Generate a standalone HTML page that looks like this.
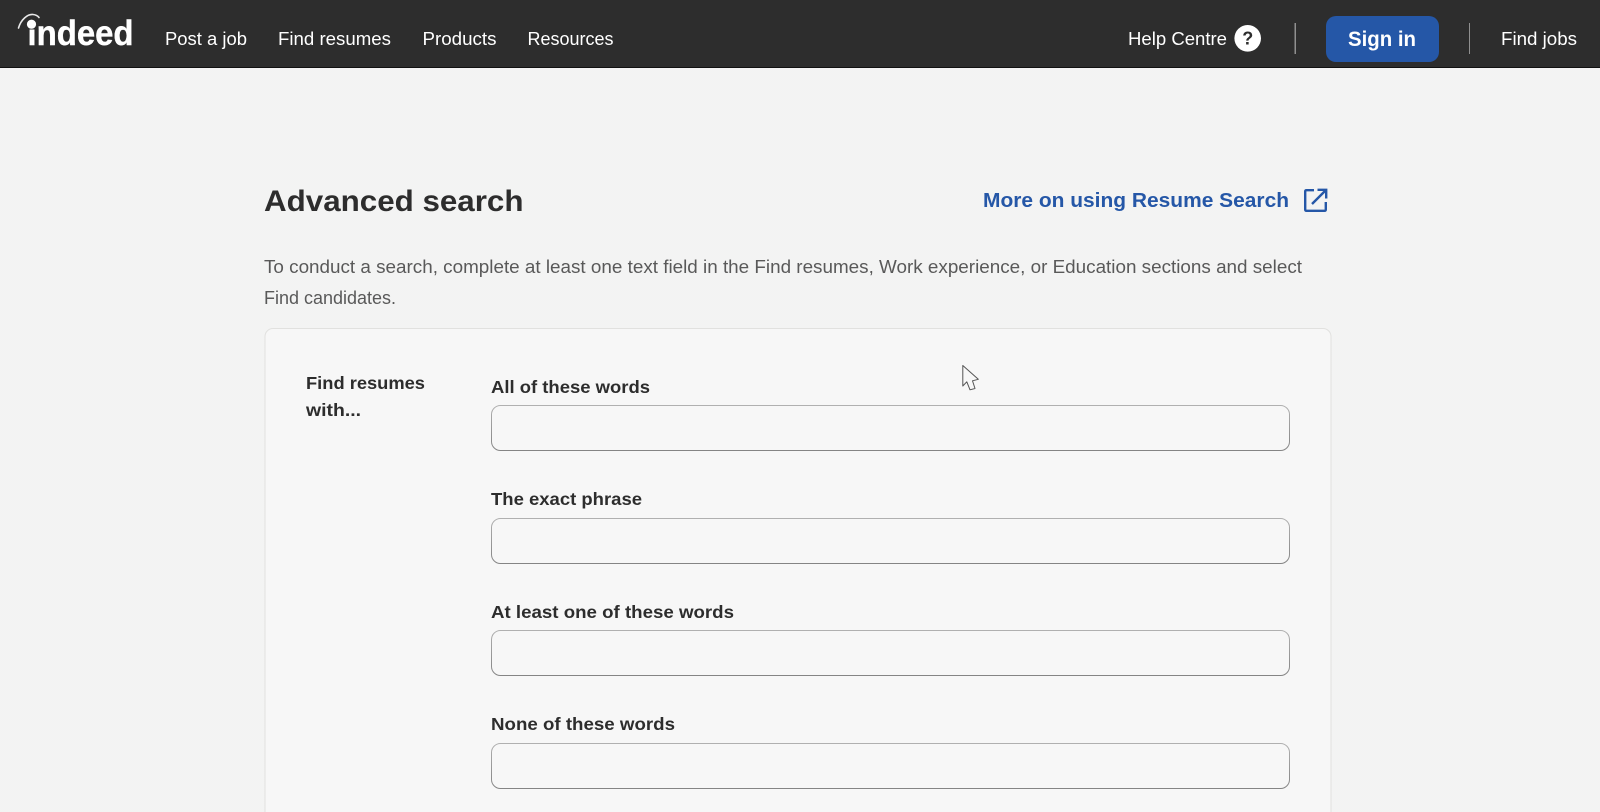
<!DOCTYPE html>
<html lang="en">
<head>
<meta charset="utf-8">
<title>Advanced search</title>
<style>
html,body{margin:0;padding:0;width:1600px;height:812px;overflow:hidden;background:#f3f3f2}
svg{display:block;position:absolute;left:0;top:0}
text{font-family:"Liberation Sans",Arial,sans-serif}
.n{font-size:18px;fill:#fff}
.l{font-size:17.5px;font-weight:700;fill:#2d2d2d}
.p{font-size:18px;fill:#595959}
</style>
</head>
<body>
<svg width="1600" height="812" viewBox="0 0 1600 812" xmlns="http://www.w3.org/2000/svg">
<defs>
<pattern id="d" width="2" height="2" patternUnits="userSpaceOnUse">
<rect width="2" height="2" fill="#f4f4f2"/>
<rect width="1" height="1" fill="#f2f3f4"/>
<rect x="1" y="1" width="1" height="1" fill="#f2f3f4"/>
</pattern>
<linearGradient id="b" x1="0" y1="0" x2="0" y2="1">
<stop offset="0" stop-color="#b0b0b0"/>
<stop offset="1" stop-color="#858585"/>
</linearGradient>
</defs>
<rect width="1600" height="812" fill="url(#d)"/>

<!-- header -->
<rect width="1600" height="68" fill="#2d2d2d"/>
<rect y="67" width="1600" height="1" fill="#111"/>

<!-- logo -->
<text x="27.500" y="45" font-size="35" font-weight="700" fill="#fff" stroke="#fff" stroke-width="0.400" textLength="106" lengthAdjust="spacingAndGlyphs">indeed</text>
<rect x="26" y="17" width="9.800" height="12.500" fill="#2d2d2d"/>
<circle cx="31.500" cy="24.200" r="4.600" fill="#fff"/>
<path d="M18.500 28C21 19.500 27.500 14 33 14.500C35.500 14.700 37.500 15.500 39 17.500" fill="none" stroke="#e8e8e8" stroke-width="1.600" stroke-linecap="round"/>

<!-- nav -->
<text class="n" x="165" y="45" textLength="82" lengthAdjust="spacingAndGlyphs">Post a job</text>
<text class="n" x="278" y="45" textLength="113" lengthAdjust="spacingAndGlyphs">Find resumes</text>
<text class="n" x="422.500" y="45" textLength="74" lengthAdjust="spacingAndGlyphs">Products</text>
<text class="n" x="527.500" y="45" textLength="86" lengthAdjust="spacingAndGlyphs">Resources</text>

<text class="n" x="1128" y="45" textLength="99" lengthAdjust="spacingAndGlyphs">Help Centre</text>
<circle cx="1247.700" cy="38.300" r="13.300" fill="#fff"/>
<text x="1247.700" y="44.500" font-size="18" font-weight="700" fill="#2d2d2d" text-anchor="middle">?</text>
<rect x="1294.500" y="23" width="1.500" height="31" fill="#8f8f8f"/>
<rect x="1326" y="16" width="113" height="46" rx="10" fill="#2557a7"/>
<text x="1348" y="46" font-size="21" font-weight="700" fill="#fff" textLength="68" lengthAdjust="spacingAndGlyphs">Sign in</text>
<rect x="1469" y="23" width="1" height="31" fill="#8f8f8f"/>
<text class="n" x="1501" y="45" textLength="76" lengthAdjust="spacingAndGlyphs">Find jobs</text>

<!-- title row -->
<text x="264" y="211" font-size="30" font-weight="700" fill="#2d2d2d" textLength="259.500" lengthAdjust="spacingAndGlyphs">Advanced search</text>
<text x="983" y="207" font-size="20" font-weight="700" fill="#2557a7" textLength="306" lengthAdjust="spacingAndGlyphs">More on using Resume Search</text>
<path d="M1314 190.200H1306.500C1305.700 190.200 1305.200 190.700 1305.200 191.500V209.500C1305.200 210.300 1305.700 210.800 1306.500 210.800H1324.500C1325.300 210.800 1325.800 210.300 1325.800 209.500V202" fill="none" stroke="#2557a7" stroke-width="2.400"/>
<path d="M1312 204L1325 191M1317.500 189.800H1326.200V198.500" fill="none" stroke="#2557a7" stroke-width="2.400"/>

<!-- paragraph -->
<text class="p" x="264" y="273" textLength="1038" lengthAdjust="spacingAndGlyphs">To conduct a search, complete at least one text field in the Find resumes, Work experience, or Education sections and select</text>
<text class="p" x="264" y="304" textLength="132" lengthAdjust="spacingAndGlyphs">Find candidates.</text>

<!-- card -->
<path d="M265 830V336.500A8 8 0 0 1 273 328.500H1323A8 8 0 0 1 1331 336.500V830Z" fill="#f7f7f7" stroke="#e1e1df" stroke-width="1"/>

<text class="l" x="306" y="389" textLength="119" lengthAdjust="spacingAndGlyphs">Find resumes</text>
<text class="l" x="306" y="416" textLength="55" lengthAdjust="spacingAndGlyphs">with...</text>

<text class="l" x="491" y="393" textLength="159" lengthAdjust="spacingAndGlyphs">All of these words</text>
<rect x="491.500" y="405.500" width="798" height="45" rx="9" fill="#f7f7f7" stroke="url(#b)"/>

<text class="l" x="491" y="505" textLength="151" lengthAdjust="spacingAndGlyphs">The exact phrase</text>
<rect x="491.500" y="518.500" width="798" height="45" rx="9" fill="#f7f7f7" stroke="url(#b)"/>

<text class="l" x="491" y="618" textLength="243" lengthAdjust="spacingAndGlyphs">At least one of these words</text>
<rect x="491.500" y="630.500" width="798" height="45" rx="9" fill="#f7f7f7" stroke="url(#b)"/>

<text class="l" x="491" y="730" textLength="184" lengthAdjust="spacingAndGlyphs">None of these words</text>
<rect x="491.500" y="743.500" width="798" height="45" rx="9" fill="#f7f7f7" stroke="url(#b)"/>

<!-- cursor -->
<path d="M962.800 365.500V386L966.800 381.800L970 389.800L975 388.500L972.500 380.800L978.300 379.300Z" fill="#f7f7f7" stroke="#555" stroke-width="1" stroke-linejoin="round"/>
</svg>
</body>
</html>
